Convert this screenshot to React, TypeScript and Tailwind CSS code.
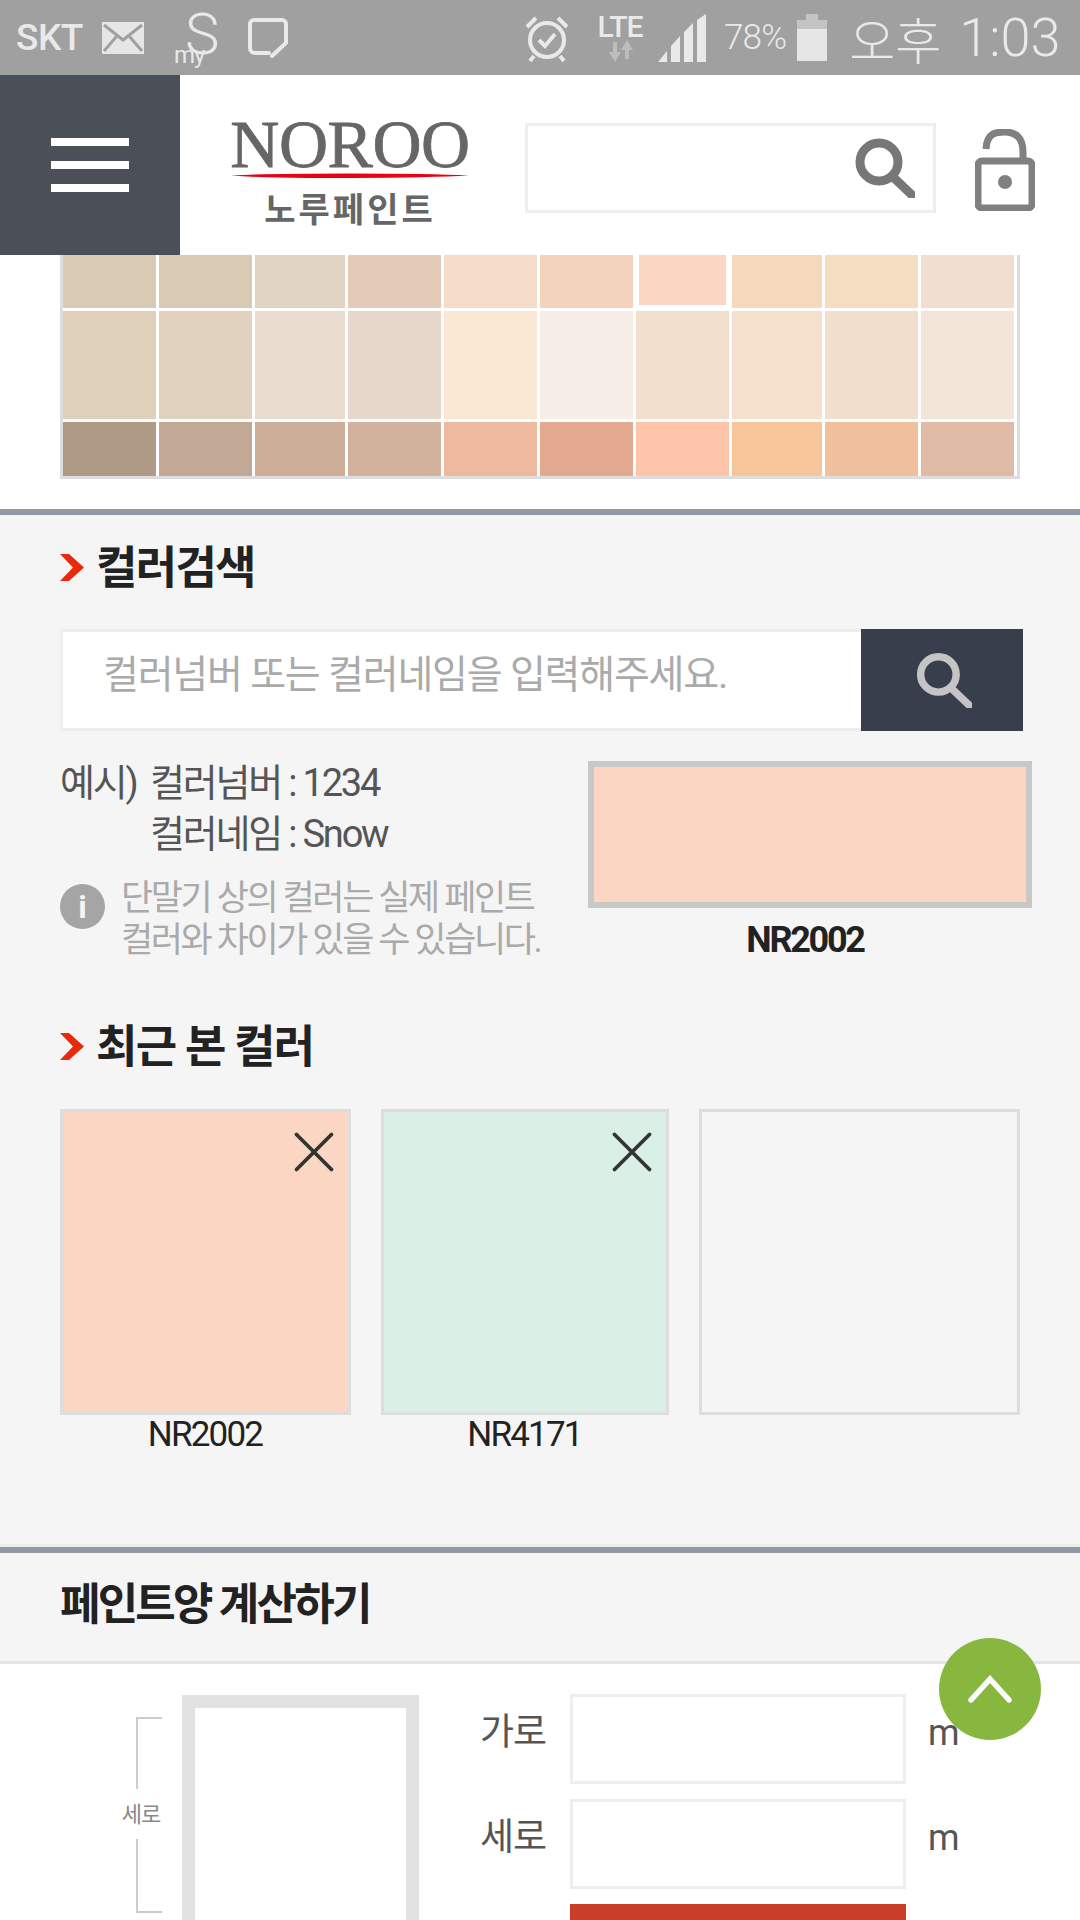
import { X } from 'lucide-react';

const columns = 'grid grid-cols-[93px_93px_90px_93px_93px_93px_93px_90px_93px_93px] gap-x-[3px]';

const row1 = ['#d9cab6', '#d9cab6', '#e1d3c2', '#e4cbb9', '#f5dcc9', '#f3d2be', '#fbd7c3', '#f4d9bc', '#f5ddc2', '#f1decf'];
const row2 = ['#dfd0bc', '#e1d2c0', '#e9dccf', '#e7d7ca', '#f9e7d3', '#f5ede6', '#f3dfce', '#f4e0cd', '#f0dfcd', '#f2e5d7'];
const row3 = ['#ae9a85', '#c2a995', '#ccae98', '#d2b29d', '#eeba9f', '#e3a990', '#fec4aa', '#f7c59a', '#f0bf9c', '#dfbba6'];

function Chevron() {
  return (
    <svg width="24" height="27" viewBox="0 0 24 27" className="shrink-0">
      <path d="M0 0h9l15 13.5L9 27H0l13-13.500z" fill="#e8290b" />
    </svg>
  );
}

function Heading({ children }: { children: string }) {
  return (
    <div className="flex h-[52px] items-center">
      <Chevron />
      <h2 className="ml-[12px] pt-[3px] text-[45px] font-bold leading-[52px] tracking-[-1.7px] text-[#222]">{children}</h2>
    </div>
  );
}

function Magnifier({ color, size, width }: { color: string; size: number; width: number }) {
  return (
    <svg width={size} height={size} viewBox="0 0 60 60" fill="none" stroke={color} strokeWidth={width}>
      <circle cx="24" cy="24" r="19" />
      <path d="M37 38l20 19" strokeLinecap="round" />
    </svg>
  );
}

function StatusBar() {
  return (
    <div className="flex h-[75px] shrink-0 items-center bg-[#a0a0a0] pl-[16px] text-[#e9e9e9]">
      <span className="w-[86px] text-[37px] font-medium leading-none tracking-[-0.5px]">SKT</span>
      <svg width="42" height="32" viewBox="0 0 42 32">
        <rect width="42" height="32" fill="#e6e6e6" />
        <path d="M2 3l19 15L40 3M2 29l13-15M40 29L27 14" fill="none" stroke="#a0a0a0" strokeWidth="3" />
      </svg>
      <div className="relative ml-[30px] h-[50px] w-[44px]">
        <span className="absolute left-[11px] top-[-8px] text-[58px] font-light leading-none">S</span>
        <span className="absolute bottom-[-4px] left-0 text-[24px] leading-none tracking-[-1px]">my</span>
      </div>
      <svg width="42" height="42" viewBox="0 0 42 42" fill="none" stroke="#e9e9e9" strokeWidth="4" className="ml-[29px]">
        <path d="M22 36H8a5 5 0 0 1-5-5V7a4 4 0 0 1 4-4h28a4 4 0 0 1 4 4v19l-14 13" strokeLinecap="round" />
      </svg>
      <svg width="46" height="48" viewBox="0 0 46 48" fill="none" stroke="#e9e9e9" strokeWidth="4" className="ml-[235px]">
        <circle cx="23" cy="26" r="17" />
        <path d="M15 26l6 6 10-12M3 13L12 4M43 13L34 4M10 42l-4 5M36 42l4 5" />
      </svg>
      <div className="ml-[22px] flex w-[56px] flex-col items-center">
        <span className="text-[30px] font-medium leading-[26px] tracking-[-1px]">LTE</span>
        <svg width="28" height="22" viewBox="0 0 28 22" fill="#bdbdbd">
          <path d="M9 22L3 12h4V2h4v10h4zM21 0l6 10h-4v9h-4v-9h-4z" />
        </svg>
      </div>
      <svg width="48" height="48" viewBox="0 0 48 48" fill="#e9e9e9" className="ml-[10px]">
        <path d="M0 48l9-11v11zM13 48V32l9-10v26zM26 48V18l9-9v39zM39 48V6l9-6v48z" />
      </svg>
      <span className="ml-[18px] text-[35px] font-light leading-none tracking-[-0.8px]">78%</span>
      <div className="ml-[11px] flex w-[30px] flex-col items-center">
        <div className="h-[6px] w-[12px] bg-[#c4c4c4]" />
        <div className="h-[9px] w-[30px] bg-[#c4c4c4]" />
        <div className="h-[32px] w-[30px] bg-[#e6e6e6]" />
      </div>
      <span className="ml-[22px] text-[50px] font-light leading-none" style={{ fontFamily: '"Noto Sans CJK KR", sans-serif' }}>오후</span>
      <span className="ml-[18px] text-[54px] font-light leading-none">1:03</span>
    </div>
  );
}

function Header() {
  return (
    <header className="flex h-[180px] shrink-0 bg-white">
      <div className="flex w-[180px] flex-col items-center justify-center gap-[15px] bg-[#4b4f58]">
        <div className="h-[8px] w-[78px] bg-white" />
        <div className="h-[8px] w-[78px] bg-white" />
        <div className="h-[8px] w-[78px] bg-white" />
      </div>
      <div className="ml-[50px] flex w-[240px] flex-col items-center pt-[41px]">
        <span className="text-[68px] leading-[56px] tracking-[-0.5px] text-[#666] [-webkit-text-stroke:0.8px_#666]" style={{ fontFamily: '"Liberation Serif", serif' }}>NOROO</span>
        <svg width="238" height="5" viewBox="0 0 238 5" className="mt-px">
          <path d="M0 2.500Q40 .5 119 .5T238 2.500Q200 4.500 119 5T0 2.500z" fill="#e60012" />
        </svg>
        <span className="mt-[12px] text-[34px] font-bold leading-[40px] tracking-[3px] text-[#666]">노루페인트</span>
      </div>
      <div className="ml-[55px] mt-[48px] flex h-[90px] w-[411px] items-center justify-end border-[3px] border-[#eee] pr-[18px]">
        <Magnifier color="#777" size={60} width={9} />
      </div>
      <svg width="60" height="82" viewBox="0 0 60 82" fill="none" stroke="#808080" className="ml-[39px] mt-[54px]">
        <rect x="3" y="32" width="54" height="47" rx="4" strokeWidth="7" />
        <path d="M11 20C12 3 22 3 30 3c10 0 18 5 18 20v9" strokeWidth="7" />
        <circle cx="30" cy="53" r="7" fill="#808080" stroke="none" />
      </svg>
    </header>
  );
}

function RecentCard({ code, color }: { code?: string; color?: string }) {
  return (
    <div>
      <div className="relative h-[306px] border-[3px] border-[#ddd]" style={{ backgroundColor: color }}>
        {code && <X className="absolute right-[-1px] top-[5px] h-[70px] w-[70px] text-[#333]" strokeWidth={1.3} />}
      </div>
      {code && <p className="pr-[1px] text-center text-[35px] leading-[40px] tracking-[-1.8px] text-[#222]">{code}</p>}
    </div>
  );
}

export default function App() {
  return (
    <div className="relative flex h-[1920px] w-[1080px] flex-col overflow-hidden bg-white" style={{ fontFamily: 'Roboto, "Noto Sans CJK KR", sans-serif' }}>
      <StatusBar />
      <Header />

      <section className="h-[254px] shrink-0 bg-white">
        <div className="ml-[60px] w-[960px] border-x-[3px] border-b-[3px] border-[#ddd] bg-white">
          <div className={`${columns} h-[53px]`}>
            {row1.map((c, i) => (
              <div key={i} className={i === 6 ? 'mx-[3px] mb-[3px]' : ''} style={{ backgroundColor: c }} />
            ))}
          </div>
          <div className={`${columns} mt-[3px] h-[108px]`}>
            {row2.map((c, i) => <div key={i} style={{ backgroundColor: c }} />)}
          </div>
          <div className={`${columns} mt-[3px] h-[54px]`}>
            {row3.map((c, i) => <div key={i} style={{ backgroundColor: c }} />)}
          </div>
        </div>
      </section>

      <section className="h-[1035px] shrink-0 border-t-[6px] border-[#9499a1] bg-[#f5f5f5] pl-[60px] pt-[26px]">
        <Heading>컬러검색</Heading>

        <div className="mt-[36px] flex h-[102px] w-[963px]">
          <div className="flex flex-1 items-center border-[3px] border-r-0 border-[#eee] bg-white pb-[9px] pl-[40px] text-[39px] tracking-[-1.2px] text-[#aaa]">
            컬러넘버 또는 컬러네임을 입력해주세요.
          </div>
          <div className="flex w-[162px] items-center justify-center bg-[#383e4c] pl-[4px]">
            <Magnifier color="#c4c4c4" size={56} width={8} />
          </div>
        </div>

        <div className="flex">
          <div className="mt-[27px] w-[528px]">
            <div className="flex text-[38px] leading-[51px] tracking-[-2.2px] text-[#555]">
              <span className="w-[90px]">예시)</span>
              <div>
                <p>컬러넘버 : 1234</p>
                <p>컬러네임 : Snow</p>
              </div>
            </div>
            <div className="mt-[18px] flex">
              <div className="mt-[6px] flex h-[45px] w-[45px] shrink-0 items-center justify-center rounded-full bg-[#a5a5a5] text-[32px] font-bold leading-none text-[#f5f5f5]">i</div>
              <p className="ml-[16px] whitespace-nowrap text-[35px] leading-[42px] tracking-[-2.4px] text-[#aaa]">
                단말기 상의 컬러는 실제 페인트<br />컬러와 차이가 있을 수 있습니다.
              </p>
            </div>
          </div>
          <div className="mt-[30px] w-[444px]">
            <div className="h-[147px] border-[6px] border-[#c8c8c8] bg-[#fbd7c3]" />
            <p className="mt-[12px] pr-[10px] text-center text-[36px] font-bold leading-[40px] tracking-[-2.3px] text-[#222]">NR2002</p>
          </div>
        </div>

        <div className="mt-[58px]">
          <Heading>최근 본 컬러</Heading>
        </div>

        <div className="mt-[37px] grid w-[960px] grid-cols-[291px_288px_321px] gap-x-[30px]">
          <RecentCard code="NR2002" color="#fbd7c3" />
          <RecentCard code="NR4171" color="#daefe6" />
          <RecentCard />
        </div>
      </section>

      <section className="flex-1 border-t-[3px] border-[#eee]">
        <div className="flex h-[117px] items-center border-y-[6px] border-b-[3px] border-t-[#9499a1] border-b-[#e6e6e6] bg-[#f5f5f5] pb-[5px] pl-[60px]">
          <h2 className="text-[44px] font-bold tracking-[-2.8px] text-[#222]">페인트양 계산하기</h2>
        </div>
        <div className="flex pt-[30px]">
          <div className="ml-[120px] mt-[23px] flex h-[196px] w-[42px] flex-col items-end">
            <div className="h-[72px] w-[26px] self-end border-l-2 border-t-2 border-[#ccc]" />
            <span className="flex h-[50px] w-[42px] items-center justify-center whitespace-nowrap text-[22px] tracking-[-1px] text-[#888]">세로</span>
            <div className="h-[74px] w-[26px] self-end border-b-2 border-l-2 border-[#ccc]" />
          </div>
          <div className="ml-[20px] mt-px h-[240px] w-[237px] border-x-[13px] border-t-[13px] border-[#e2e2e2]" />
          <div className="ml-[61px]">
            <div className="flex h-[90px] items-center">
              <span className="w-[90px] pb-[12px] text-[37px] tracking-[-1px] text-[#555]">가로</span>
              <div className="h-full w-[336px] border-[3px] border-[#eee]" />
              <span className="ml-[22px] pb-[12px] text-[36px] text-[#555]">m</span>
            </div>
            <div className="mt-[15px] flex h-[90px] items-center">
              <span className="w-[90px] pb-[12px] text-[37px] tracking-[-1px] text-[#555]">세로</span>
              <div className="h-full w-[336px] border-[3px] border-[#eee]" />
              <span className="ml-[22px] pb-[12px] text-[36px] text-[#555]">m</span>
            </div>
            <div className="ml-[90px] mt-[15px] h-[60px] w-[336px] bg-[#c93e2b]" />
          </div>
        </div>
      </section>

      <button className="absolute left-[939px] top-[1638px] flex h-[102px] w-[102px] items-center justify-center rounded-full bg-[#84b53a]/[0.97]">
        <svg width="44" height="28" viewBox="0 0 44 28" fill="none" stroke="#fff" strokeWidth="5.500" strokeLinecap="round">
          <path d="M3 25L22 4l19 21" />
        </svg>
      </button>
    </div>
  );
}
